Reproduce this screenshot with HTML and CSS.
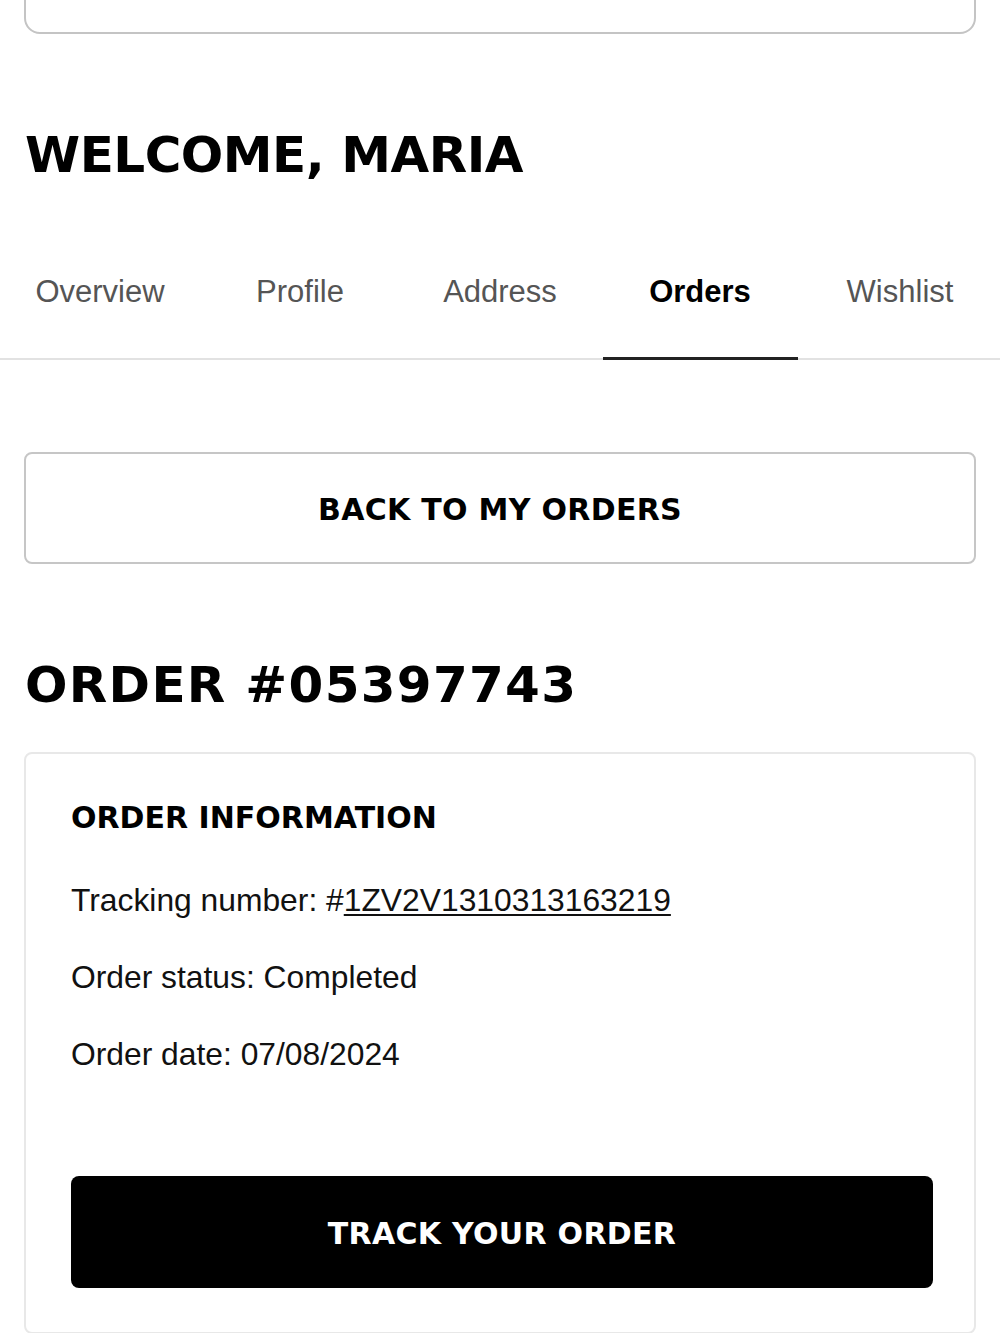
FILE: index.html
```html
<!DOCTYPE html>
<html lang="en">
<head>
    <meta charset="UTF-8">
    <meta name="viewport" content="width=device-width, initial-scale=1.0">
    <title>My Account - Order #05397743</title>
    <link rel="stylesheet" href="styles.css">
</head>
<body>
<div class="page">
    <div class="search-box"></div>

    <h1 class="welcome">WELCOME, MARIA</h1>
</div>

<nav class="account-tabs">
    <a class="tab" href="#">Overview</a>
    <a class="tab" href="#">Profile</a>
    <a class="tab" href="#">Address</a>
    <a class="tab active" href="#">Orders</a>
    <a class="tab" href="#">Wishlist</a>
</nav>

<div class="page">
    <button class="btn-outline">BACK TO MY ORDERS</button>

    <h2 class="order-title">ORDER #05397743</h2>

    <div class="order-card">
        <h3 class="card-title">ORDER INFORMATION</h3>
        <p class="info-line">Tracking number: #<a class="tracking-link" href="#">1ZV2V1310313163219</a></p>
        <p class="info-line">Order status: Completed</p>
        <p class="info-line">Order date: 07/08/2024</p>
        <button class="btn-dark">TRACK YOUR ORDER</button>
    </div>
</div>
</body>
</html>
```

FILE: styles.css
```css
body, html {
    margin: 0;
    padding: 0;
    background-color: #ffffff;
    font-family: "Liberation Sans", Arial, sans-serif;
    color: #111;
    overflow: hidden;
}
.page {
    padding: 0 24px;
}
.search-box {
    height: 80px;
    margin-top: -46px;
    border: 2px solid #c4c4c4;
    border-radius: 16px;
    box-sizing: border-box;
}
.welcome,
.order-title {
    font-family: "DejaVu Sans", sans-serif;
    font-weight: bold;
    font-size: 50px;
    line-height: 60px;
    margin: 91px 0 0 1px;
    color: #000;
}
.welcome {
    letter-spacing: -0.5px;
}
.order-title {
    margin-top: 91px;
    letter-spacing: 1.3px;
}
.account-tabs {
    display: grid;
    grid-template-columns: repeat(5, 1fr);
    margin-top: 87px;
    border-bottom: 2px solid #e2e2e2;
}
.tab {
    position: relative;
    text-align: center;
    font-size: 31px;
    line-height: 40px;
    padding-bottom: 46px;
    color: #555;
    text-decoration: none;
}
.tab.active {
    font-weight: bold;
    color: #000;
}
.tab.active::after {
    content: "";
    position: absolute;
    left: 3px;
    right: 2px;
    bottom: -2px;
    height: 3px;
    background-color: #222;
}
.btn-outline,
.btn-dark {
    display: block;
    width: 100%;
    height: 112px;
    padding-top: 4px;
    font-family: "DejaVu Sans", sans-serif;
    font-weight: bold;
    font-size: 30px;
    letter-spacing: 0.3px;
    border-radius: 8px;
    cursor: pointer;
}
.btn-outline {
    margin-top: 92px;
    background-color: #fff;
    color: #000;
    border: 2px solid #c6c6c6;
}
.order-card {
    margin-top: 37px;
    border: 2px solid #e8e8e8;
    border-radius: 8px;
    padding: 46px 41px 44px 45px;
}
.card-title {
    font-family: "DejaVu Sans", sans-serif;
    font-weight: bold;
    font-size: 30px;
    line-height: 36px;
    margin: 0;
    color: #000;
}
.info-line {
    font-size: 31.8px;
    line-height: 40px;
    margin: 37px 0 0;
}
.info-line:first-of-type {
    margin-top: 44px;
}
.tracking-link {
    color: #111;
    text-decoration: underline;
    text-decoration-thickness: 2px;
    text-underline-offset: 3px;
}
.btn-dark {
    margin-top: 102px;
    background-color: #000;
    color: #fff;
    border: none;
}
```
